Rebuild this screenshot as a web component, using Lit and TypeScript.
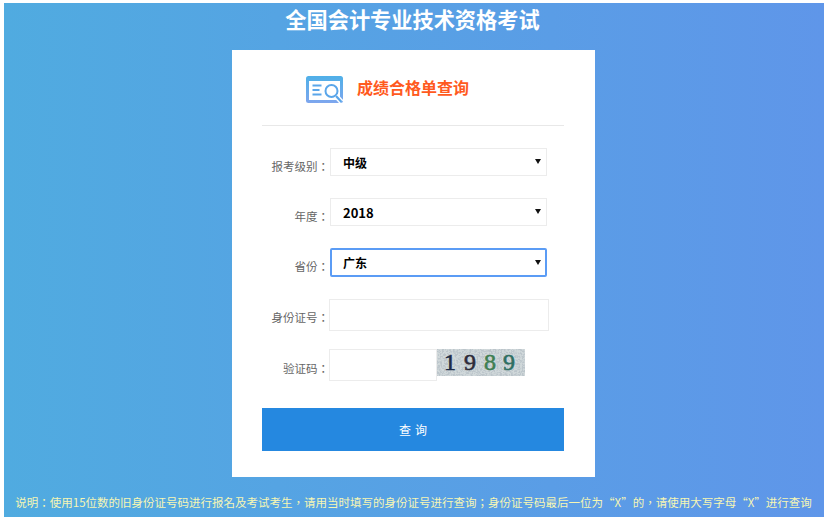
import { LitElement, html, css } from "lit";
import { customElement } from "lit/decorators.js";

@customElement("app-root")
export class AppRoot extends LitElement {
  static styles = css`
    :host {
      display: block;
      width: 832px;
      height: 521px;
      box-sizing: border-box;
      padding: 3px 8px 4px 4px;
      background: #fff;
      font-family: "Noto Sans CJK SC", "Liberation Sans", sans-serif;
    }
    .page {
      height: 100%;
      display: flex;
      flex-direction: column;
      align-items: center;
      background: linear-gradient(to right, #50abe0, #5f96e9);
    }
    h1 {
      margin: 0 3px 0 0;
      height: 47px;
      line-height: 31px;
      font-size: 21.2px;
      font-weight: 700;
      color: #fff;
    }
    .card {
      width: 363px;
      height: 427px;
      box-sizing: border-box;
      margin-right: 1px;
      background: #fff;
      padding: 0 31px 0 30px;
      flex: none;
    }
    .head {
      height: 76px;
      box-sizing: border-box;
      border-bottom: 1px solid #e8e8e8;
      display: flex;
      align-items: flex-start;
      padding: 26px 0 0 44px;
      gap: 13px;
    }
    .head svg {
      display: block;
      flex: none;
    }
    .head h2 {
      margin: 0;
      font-size: 16px;
      line-height: 22px;
      font-weight: 700;
      color: #ff5a1e;
    }
    form {
      display: grid;
      grid-template-columns: 67px 1fr;
      grid-auto-rows: 50px;
      padding-top: 22px;
    }
    .row {
      display: contents;
    }
    label {
      font-family: "Noto Sans CJK TC", "Noto Sans CJK SC", sans-serif;
      font-size: 11.5px;
      line-height: 16px;
      color: #666;
      text-align: right;
      padding: 10px 0 0 0;
      white-space: nowrap;
    }
    label.low {
      padding-top: 11px;
    }
    label.lower {
      padding-top: 12px;
    }
    .pick {
      position: relative;
      display: block;
      width: 217px;
      margin-left: 1px;
    }
    .pick::after {
      content: "";
      position: absolute;
      top: 11px;
      right: 6px;
      border-style: solid;
      border-width: 5px 3px 0 3px;
      border-color: #111 transparent transparent transparent;
      pointer-events: none;
    }
    .pick.open::after {
      top: 12px;
    }
    select {
      display: block;
      width: 217px;
      height: 28px;
      box-sizing: border-box;
      margin: 0;
      padding: 0 12px;
      appearance: none;
      border: 1px solid #ececec;
      border-radius: 0;
      background: #fff;
      color: #000;
      font-family: inherit;
      font-size: 12px;
      font-weight: 700;
      outline: none;
    }
    select.num {
      font-size: 13px;
    }
    select.focus {
      border: 2px solid #5b9cf5;
      border-radius: 2px;
      height: 29px;
      padding: 0 11px;
    }
    input {
      display: block;
      box-sizing: border-box;
      height: 32px;
      border: 1px solid #ececec;
      background: #fff;
      outline: none;
      padding: 0;
      margin-top: 1px;
    }
    input.id {
      width: 220px;
    }
    input.code {
      width: 108px;
    }
    .captcha-row {
      display: flex;
      align-items: flex-start;
    }
    .captcha {
      display: block;
      width: 88px;
      height: 27px;
      margin-top: 1px;
      flex: none;
    }
    .captcha text {
      font-family: "Liberation Serif", serif;
      font-size: 24px;
      font-weight: 400;
      stroke-width: 0.6px;
      text-anchor: middle;
    }
    .submit {
      grid-column: 1 / -1;
      height: 43px;
      margin-top: 10px;
      border: 0;
      background: #2588e0;
      color: #fff;
      font-family: inherit;
      font-size: 12px;
      letter-spacing: 4px;
      padding: 0 0 0 4px;
    }
    .note {
      margin: 17px 1px 0 0;
      font-family: "Noto Sans CJK TC", "Noto Sans CJK SC", sans-serif;
      font-size: 11.5px;
      line-height: 16px;
      color: #f6f6b4;
      white-space: nowrap;
    }
  `;

  render() {
    return html`
      <div class="page">
        <h1>全国会计专业技术资格考试</h1>
        <div class="card">
          <div class="head">
            <svg width="38" height="28" viewBox="0 0 38 28">
              <defs>
                <linearGradient id="ic" x1="0" y1="0" x2="0" y2="1">
                  <stop offset="0" stop-color="#4fb0e8" />
                  <stop offset="1" stop-color="#7ea6ee" />
                </linearGradient>
              </defs>
              <rect width="37" height="27" rx="2.5" fill="url(#ic)" />
              <rect x="3" y="5" width="31" height="19" fill="#fff" />
              <path d="M6.5 9.5h9M6.5 14h7M6.5 18.5h9" stroke="#5aa6ea" stroke-width="2.2" fill="none" />
              <circle cx="25.5" cy="15" r="7.8" fill="#fff" />
              <circle cx="25.5" cy="15" r="6" fill="#fff" stroke="#5aa6ea" stroke-width="2" />
              <path d="M30 20l5.5 6" stroke="#fff" stroke-width="5" fill="none" />
              <path d="M30 20l5.5 6" stroke="#5aa6ea" stroke-width="2.2" fill="none" />
            </svg>
            <h2>成绩合格单查询</h2>
          </div>
          <form>
            <div class="row">
              <label>报考级别：</label>
              <div><span class="pick"><select><option>中级</option></select></span></div>
            </div>
            <div class="row">
              <label>年度：</label>
              <div><span class="pick"><select class="num"><option>2018</option></select></span></div>
            </div>
            <div class="row">
              <label>省份：</label>
              <div><span class="pick open"><select class="focus"><option>广东</option></select></span></div>
            </div>
            <div class="row">
              <label class="low">身份证号：</label>
              <div><input class="id" /></div>
            </div>
            <div class="row">
              <label class="lower">验证码：</label>
              <div class="captcha-row">
                <input class="code" />
                <svg class="captcha" viewBox="0 0 88 27">
                  <filter id="noise" x="0" y="0" width="100%" height="100%">
                    <feTurbulence type="fractalNoise" baseFrequency="0.55" numOctaves="2" seed="4" />
                    <feColorMatrix
                      type="matrix"
                      values="0 0 0 0 0.5  0 0 0 0 0.56  0 0 0 0 0.6  5 0 0 0 -2.1"
                    />
                    <feGaussianBlur stdDeviation="0.4" />
                  </filter>
                  <rect width="88" height="27" fill="#d0d8da" />
                  <rect width="88" height="27" filter="url(#noise)" />
                  <text x="13" y="21" fill="#1c2c48" stroke="#1c2c48">1</text>
                  <text x="33" y="21" fill="#2e2c3a" stroke="#2e2c3a">9</text>
                  <text x="53" y="21" fill="#3f7f52" stroke="#3f7f52">8</text>
                  <text x="72" y="21" fill="#2f6f62" stroke="#2f6f62">9</text>
                </svg>
              </div>
            </div>
            <button class="submit" type="button">查询</button>
          </form>
        </div>
        <div class="note">说明：使用15位数的旧身份证号码进行报名及考试考生，请用当时填写的身份证号进行查询；身份证号码最后一位为“X”的，请使用大写字母“X”进行查询</div>
      </div>
    `;
  }
}
